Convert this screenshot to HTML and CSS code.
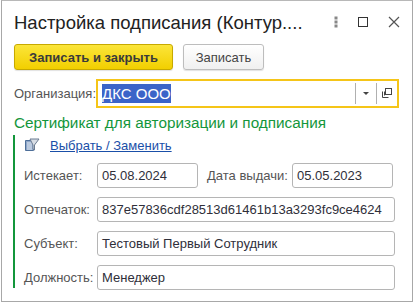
FILE: index.html
```html
<!DOCTYPE html>
<html>
<head>
<meta charset="utf-8">
<link rel="stylesheet" href="styles.css">
</head>
<body>
<div class="window">
  <div class="titlebar">
    <div class="title">Настройка подписания (Контур....</div>
    <div class="win-icons">
      <svg class="ic ic-more" width="16" height="16" viewBox="0 0 16 16"><rect x="6.5" y="2.5" width="3" height="3" fill="#888"/><rect x="6.5" y="6.5" width="3" height="3" fill="#888"/><rect x="6.5" y="10.5" width="3" height="3" fill="#888"/></svg>
      <svg class="ic" width="16" height="16" viewBox="0 0 16 16"><rect x="3.5" y="3.5" width="9" height="9" fill="none" stroke="#333" stroke-width="1"/></svg>
      <svg class="ic" width="16" height="16" viewBox="0 0 16 16"><path d="M3 3 L13 13 M13 3 L3 13" stroke="#555" stroke-width="1.2"/></svg>
    </div>
  </div>
  <div class="toolbar">
    <button class="btn btn-primary">Записать и закрыть</button>
    <button class="btn btn-plain">Записать</button>
  </div>
  <div class="org-row">
    <span class="label">Организация:</span>
    <div class="org-field">
      <span class="org-value"><span class="sel">ДКС ООО</span></span>
      <span class="sep"></span>
      <span class="org-btn"><svg width="8" height="5" viewBox="0 0 8 5"><path d="M1 1 H7 L4 4 Z" fill="#444"/></svg></span>
      <span class="sep"></span>
      <span class="org-btn"><svg width="12" height="12" viewBox="0 0 12 12"><path d="M1.5 4.5 V10.5 H7.5 M3.5 4.5 V8.5" fill="none" stroke="#444"/><rect x="4.5" y="1.5" width="6" height="6" fill="none" stroke="#444"/></svg></span>
    </div>
  </div>
  <div class="group-title">Сертификат для авторизации и подписания</div>
  <div class="group">
    <div class="link-row">
      <svg class="doc-ic" width="16" height="14" viewBox="0 0 16 14">
        <path d="M1.5 2.5 H9.5 V12.5 H1.5 Z" fill="#8ea6c8" stroke="#4e6f99"/>
        <path d="M3 5 H8 M3 7 H8 M3 9 H8 M3 11 H8" stroke="#e8eef6" stroke-width="1"/>
        <path d="M6 1 H15 L10.5 7 V12 L9 11 V7 Z" fill="#d8dde4" stroke="#6b7c92"/>
      </svg>
      <a class="link" href="#">Выбрать / Заменить</a>
    </div>
    <div class="row first">
      <span class="label lw">Истекает:</span>
      <span class="input w-date">05.08.2024</span>
      <span class="label lw2">Дата выдачи:</span>
      <span class="input w-date">05.05.2023</span>
    </div>
    <div class="row">
      <span class="label lw">Отпечаток:</span>
      <span class="input w-full">837e57836cdf28513d61461b13a3293fc9ce4624</span>
    </div>
    <div class="row">
      <span class="label lw">Субъект:</span>
      <span class="input w-full">Тестовый Первый Сотрудник</span>
    </div>
    <div class="row">
      <span class="label lw">Должность:</span>
      <span class="input w-full">Менеджер</span>
    </div>
  </div>
</div>
</body>
</html>
```
FILE: styles.css
```css
html, body {
  margin: 0;
  padding: 0;
  background: #fff;
}
body {
  font-family: "Liberation Sans", Arial, sans-serif;
  font-size: 13px;
  color: #333;
}
.window {
  box-sizing: border-box;
  margin-left: 1px;
  width: 412px;
  height: 302px;
  border: 1px solid #a8a8a8;
  border-top-color: #b8b8b8;
  background: #fff;
  overflow: hidden;
}
.titlebar {
  display: flex;
  align-items: center;
  height: 42px;
  padding-left: 12px;
  padding-right: 10px;
}
.title {
  flex: 1;
  font-size: 18.5px;
  color: #222;
  white-space: nowrap;
  padding-top: 1px;
}
.win-icons {
  display: flex;
  gap: 15px;
  align-items: center;
}
.ic { display: block; }
.ic-more { margin-right: -4px; }
.toolbar {
  display: flex;
  gap: 10px;
  padding-left: 12px;
  height: 27px;
  margin-top: 1px;
}
.btn {
  box-sizing: border-box;
  height: 26px;
  font-family: "Liberation Sans", Arial, sans-serif;
  font-size: 13px;
  color: #444;
  border: 1px solid #bdbdbd;
  border-radius: 3px;
  background: linear-gradient(#fff, #f0f0f0);
  padding: 0;
  box-shadow: 0 1px 1px rgba(0,0,0,0.12);
}
.btn-primary {
  width: 159px;
  font-weight: bold;
  background: linear-gradient(#fbe53a, #f2cf00);
  border-color: #c7a900;
  color: #3a3a3a;
}
.btn-plain { width: 81px; }
.org-row {
  display: flex;
  align-items: center;
  margin-top: 7px;
  padding-left: 12px;
  height: 30px;
}
.label { color: #555; white-space: nowrap; }
.org-row .label { width: 82px; }
.org-field {
  box-sizing: border-box;
  display: flex;
  align-items: center;
  width: 303px;
  height: 29px;
  border: 2px solid #f5c518;
  background: #fff;
}
.org-value {
  flex: 1;
  font-size: 15px;
  padding-left: 4px;
}
.sel {
  background: #3b64c8;
  color: #fff;
  padding: 1px 0;
}
.sep {
  width: 1px;
  height: 21px;
  background: #b0b0b0;
}
.org-btn {
  width: 20px;
  display: flex;
  justify-content: center;
  align-items: center;
}
.group-title {
  margin-top: 6px;
  padding-left: 12px;
  font-size: 15.3px;
  color: #13963b;
}
.group {
  margin-left: 11px;
  margin-top: 3px;
  border-left: 2px solid #13963b;
  padding-left: 9px;
  height: 153px;
}
.link-row {
  display: flex;
  align-items: center;
  gap: 10px;
  height: 20px;
  padding-left: 0;
}
.doc-ic { display: block; }
.link {
  color: #1a4fa8;
  text-decoration: underline;
  font-size: 13px;
}
.row {
  display: flex;
  align-items: center;
  margin-top: 8px;
  height: 26px;
}
.row.first { margin-top: 7px; }
.lw { width: 73px; }
.lw2 { width: 85px; margin-left: 9px; }
.input {
  box-sizing: border-box;
  height: 25px;
  border: 1px solid #b5b5b5;
  border-radius: 3px;
  padding: 0 4px;
  display: flex;
  align-items: center;
  font-size: 13px;
  color: #2f2f3a;
  white-space: nowrap;
}
.w-date { width: 101px; }
.w-full { width: 298px; }
```
